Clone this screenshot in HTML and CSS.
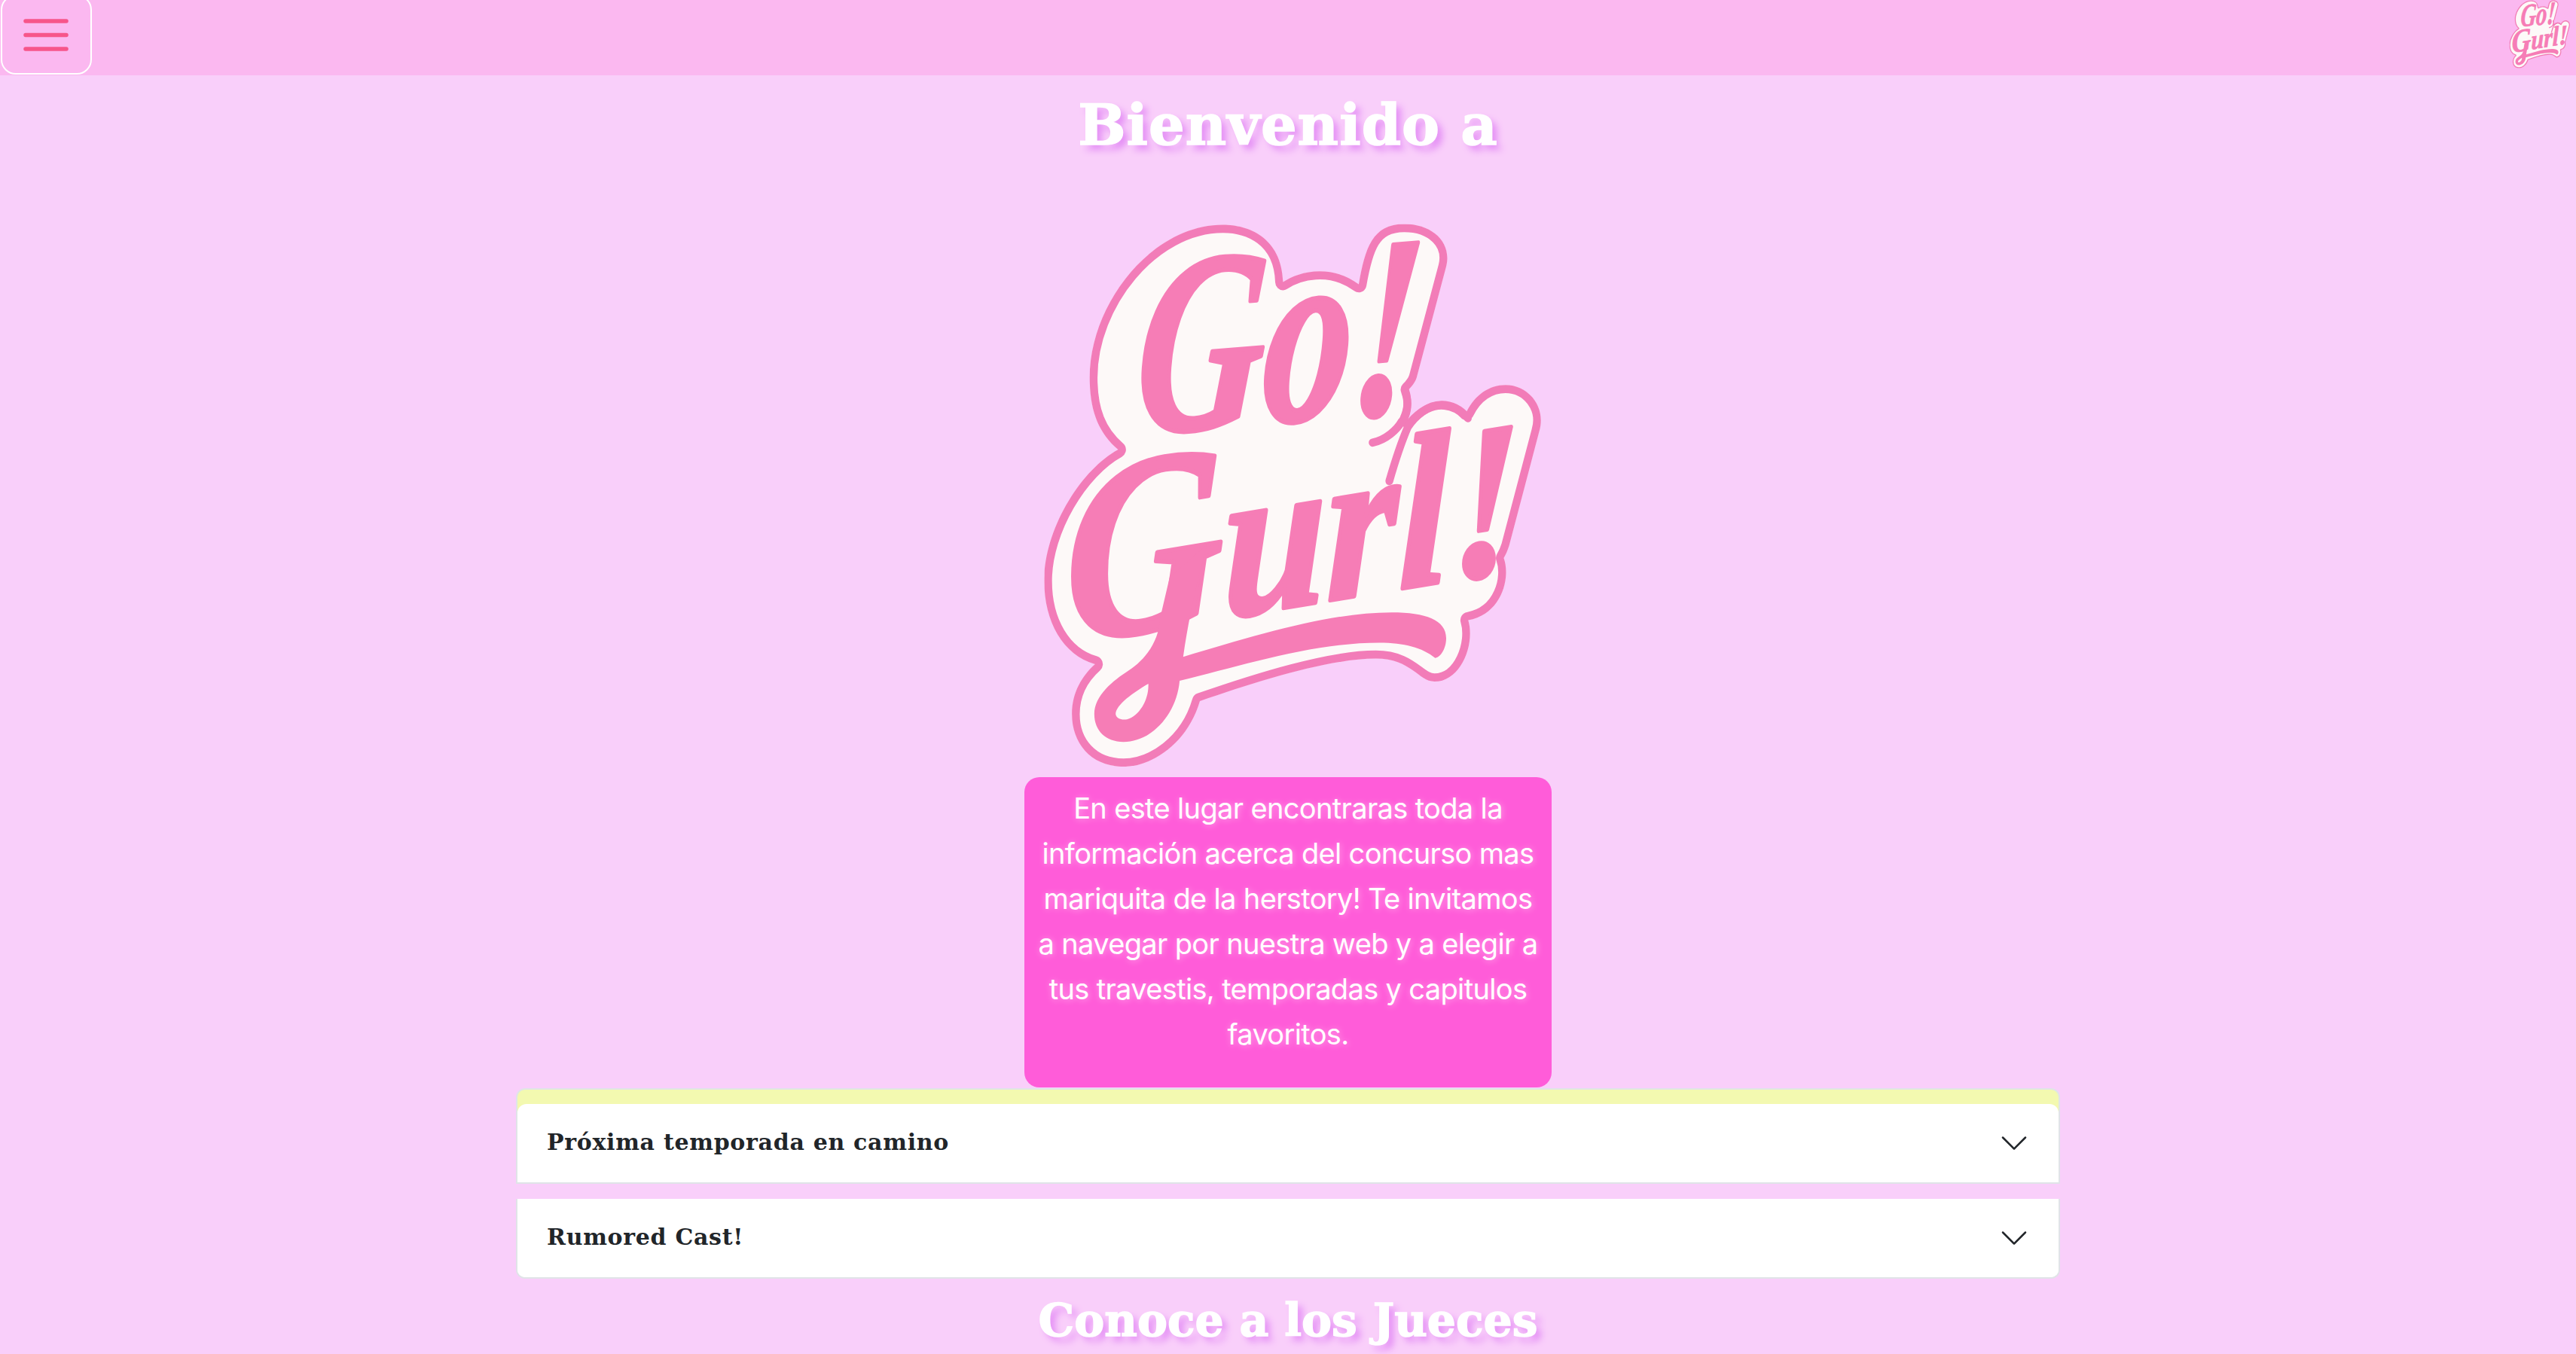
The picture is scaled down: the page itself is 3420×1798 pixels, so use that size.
FILE: index.html
```html
<!DOCTYPE html>
<html lang="es">
<head>
<meta charset="utf-8">
<title>Go! Gurl!</title>
<link rel="stylesheet" href="styles.css">
</head>
<body>
<nav class="navbar">
  <button class="menu-button" type="button" aria-label="Menu">
    <svg class="menu-icon" viewBox="0 0 60 43" aria-hidden="true">
      <path d="M3 3H57M3 21.5H57M3 40H57"/>
    </svg>
  </button>
  <svg class="nav-logo" viewBox="73 50 1422 1478" preserveAspectRatio="none" role="img" aria-label="Go! Gurl!"><use href="#gogurl"/></svg>
</nav>

<main class="page">
  <h1 class="display-title">Bienvenido a</h1>
  <svg class="hero-logo" viewBox="73 50 1422 1478" preserveAspectRatio="none" role="img" aria-label="Go! Gurl!">
    <clipPath id="sticker-clip"><path d="M600 57C670 57 765 90 769 212C810 185 900 160 982 218C1000 120 1020 55 1110 55C1190 55 1245 105 1228 170L1145 470C1140 485 1130 495 1122 503C1135 535 1130 560 1119 584C1150 550 1190 530 1225 535C1250 538 1270 548 1285 563C1310 515 1350 490 1395 490C1460 490 1510 550 1490 615L1405 925C1400 940 1395 950 1390 958C1410 1010 1385 1110 1290 1126C1310 1190 1270 1292 1195 1292C1150 1292 1130 1230 1030 1230C900 1230 700 1290 535 1345C500 1460 400 1522 320 1522C230 1522 175 1460 175 1380C175 1320 205 1275 240 1245C150 1220 97 1130 97 1020C97 880 200 720 305 665C250 620 225 560 225 470C225 270 400 57 600 57Z"/></clipPath>
    <g id="gogurl">
      <path class="sticker" clip-path="url(#sticker-clip)" d="M600 57C670 57 765 90 769 212C810 185 900 160 982 218C1000 120 1020 55 1110 55C1190 55 1245 105 1228 170L1145 470C1140 485 1130 495 1122 503C1135 535 1130 560 1119 584C1150 550 1190 530 1225 535C1250 538 1270 548 1285 563C1310 515 1350 490 1395 490C1460 490 1510 550 1490 615L1405 925C1400 940 1395 950 1390 958C1410 1010 1385 1110 1290 1126C1310 1190 1270 1292 1195 1292C1150 1292 1130 1230 1030 1230C900 1230 700 1290 535 1345C500 1460 400 1522 320 1522C230 1522 175 1460 175 1380C175 1320 205 1275 240 1245C150 1220 97 1130 97 1020C97 880 200 720 305 665C250 620 225 560 225 470C225 270 400 57 600 57Z"/>
      <path class="sliver" d="M1112 502C1125 540 1118 575 1102 590C1090 610 1060 638 1021 646"/>
      <path class="sliver" d="M1068 750C1080 710 1095 660 1120 604C1140 575 1175 544 1215 544C1245 544 1270 558 1289 580"/>
      <text class="logo-word" font-size="690" textLength="800" lengthAdjust="spacingAndGlyphs" transform="translate(345 622) rotate(-4.5) skewX(-9)">Go!</text>
      <text class="logo-word" font-size="585" textLength="1300" lengthAdjust="spacingAndGlyphs" transform="translate(157 1190) rotate(-9) skewX(-9)"><tspan class="logo-cap">G</tspan>url!</text>
      <path class="flourish" fill-rule="evenodd" d="M555 922C530 1010 505 1110 488 1225C700 1165 900 1105 1075 1105C1170 1105 1228 1125 1228 1175C1228 1205 1210 1228 1197 1228C1160 1200 1110 1187 1040 1187C850 1187 650 1250 478 1290C470 1380 400 1455 320 1455C270 1455 238 1425 238 1380C238 1330 290 1290 335 1262C385 1230 420 1180 422 1125L450 1010ZM390 1298C350 1320 298 1355 298 1380C300 1392 315 1397 330 1394C365 1385 392 1340 390 1298Z"/>
    </g>
  </svg>
  <div class="intro">
    <p>En este lugar encontraras toda la<br>información acerca del concurso mas<br>mariquita de la herstory! Te invitamos<br>a navegar por nuestra web y a elegir a<br>tus travestis, temporadas y capitulos<br>favoritos.</p>
  </div>
  <section class="accordion">
    <div class="accordion-item accordion-first">
      <div class="accordion-header">
        <span>Próxima temporada en camino</span>
        <svg class="chevron" viewBox="0 0 16 16" aria-hidden="true"><path d="M1.646 4.646a.5.5 0 0 1 .708 0L8 10.293l5.646-5.647a.5.5 0 0 1 .708.708l-6 6a.5.5 0 0 1-.708 0l-6-6a.5.5 0 0 1 0-.708z"/></svg>
      </div>
    </div>
    <div class="accordion-item accordion-last">
      <div class="accordion-header">
        <span>Rumored Cast!</span>
        <svg class="chevron" viewBox="0 0 16 16" aria-hidden="true"><path d="M1.646 4.646a.5.5 0 0 1 .708 0L8 10.293l5.646-5.647a.5.5 0 0 1 .708.708l-6 6a.5.5 0 0 1-.708 0l-6-6a.5.5 0 0 1 0-.708z"/></svg>
      </div>
    </div>
  </section>
  <h2 class="section-title">Conoce a los Jueces</h2>
</main>
</body>
</html>
```
FILE: styles.css
```css
* { box-sizing: border-box; }

html, body {
  margin: 0;
  height: 1798px;
  overflow: hidden;
}

body {
  background: #f9cffa;
  font-family: "Inter", "Liberation Sans", sans-serif;
  color: #212529;
}

.sticker {
  fill: #fdf9f8;
  stroke: #f27cb8;
  stroke-width: 44;
  stroke-linejoin: round;
}

.sliver {
  fill: none;
  stroke: #f27cb8;
  stroke-width: 22;
  stroke-linecap: round;
}

.logo-word {
  font-family: "Liberation Serif", serif;
  font-weight: 700;
  font-style: italic;
  fill: #f67db6;
  stroke: #f67db6;
  stroke-width: 12;
  stroke-linejoin: round;
}

.logo-cap { font-size: 690px; }

.flourish { fill: #f67db6; }

.navbar {
  display: flex;
  justify-content: space-between;
  align-items: flex-start;
  height: 100px;
  padding: 0 8px 0 1px;
  background: #fbb8f0;
  overflow: hidden;
}

.menu-button {
  display: flex;
  align-items: center;
  justify-content: center;
  width: 121px;
  height: 106px;
  margin-top: -7px;
  padding: 0;
  background: transparent;
  border: 2px solid #fff;
  border-radius: 20px;
}

.menu-icon {
  width: 60px;
  height: 43px;
  margin-left: -1px;
}

.menu-icon path {
  fill: none;
  stroke: #f7558a;
  stroke-width: 5.5;
  stroke-linecap: round;
}

.nav-logo {
  width: 82px;
  height: 91px;
}

.page {
  display: flex;
  flex-direction: column;
  align-items: center;
}

.display-title,
.section-title {
  margin: 0;
  font-family: "DejaVu Serif", serif;
  font-weight: 700;
  color: #fff;
  -webkit-text-stroke: 1.5px #fff;
  text-shadow: 7px 7px 10px #e48ff5;
}

.display-title {
  margin-top: 21px;
  margin-bottom: -1px;
  font-size: 75px;
  line-height: 90px;
  letter-spacing: 1px;
}

.hero-logo {
  display: block;
  width: 671px;
  height: 726px;
  margin-top: 85px;
  overflow: visible;
}

.intro {
  width: 700px;
  height: 412px;
  margin-top: 11px;
  padding-top: 11px;
  background: #ff5cd9;
  border-radius: 20px;
}

.intro p {
  margin: 0;
  font-size: 38px;
  line-height: 60px;
  text-align: center;
  color: #fff;
  letter-spacing: -0.65px;
  text-shadow: 1px 1px 8px rgba(255, 255, 255, 0.45);
}

.accordion {
  width: 2050px;
  margin-top: 1px;
}

.accordion-item {
  border: 2px solid #e0e4e8;
  border-top: 0;
  background: #fff;
}

.accordion-first {
  padding-top: 19px;
  background: #f3f9b0;
  border-top: 2px solid #e0e4e8;
  border-radius: 12px 12px 0 0;
}

.accordion-last {
  margin-top: 20px;
  border-radius: 0 0 12px 12px;
}

.accordion-header {
  display: flex;
  align-items: center;
  justify-content: space-between;
  height: 104px;
  padding: 0 39px;
  background: #fff;
  font-family: "DejaVu Serif", serif;
  font-weight: 700;
  font-size: 30px;
  letter-spacing: 0.7px;
}

.accordion-header span {
  margin-top: -3px;
}

.accordion-first .accordion-header {
  border-radius: 12px 12px 0 0;
}

.accordion-last .accordion-header {
  border-radius: 0 0 10px 10px;
}

.chevron {
  width: 40px;
  height: 40px;
  fill: #212529;
}

.section-title {
  margin-top: 15px;
  font-size: 60px;
  line-height: 80px;
}
```
